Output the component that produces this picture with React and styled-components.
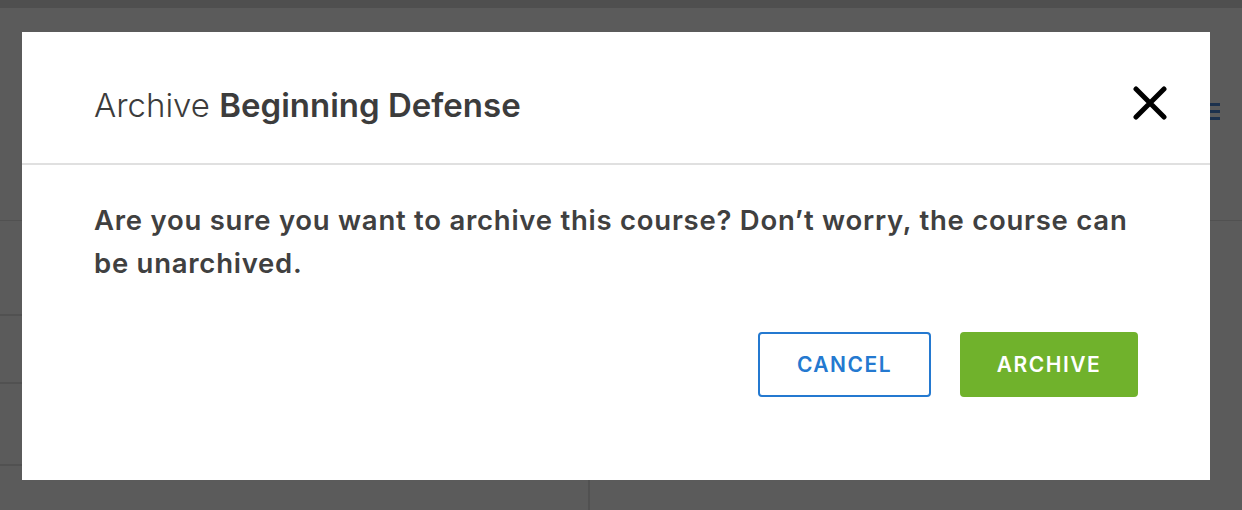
import React from "react";
import styled, { createGlobalStyle } from "styled-components";

const GlobalStyle = createGlobalStyle`
  html, body {
    margin: 0;
    padding: 0;
    width: 1242px;
    height: 510px;
    overflow: hidden;
    font-family: Inter, "Open Sans", "Liberation Sans", sans-serif;
  }
`;

// page behind the dialog
const Page = styled.div`
  position: relative;
  width: 1242px;
  height: 510px;
  background: #ffffff;
  display: flex;
  flex-direction: column;
`;

const TopStrip = styled.div`
  height: 8px;
  background: #dedede;
`;

const Toolbar = styled.div`
  height: 213px;
  box-sizing: border-box;
  border-bottom: 1px solid #e4e4e4;
  display: flex;
  justify-content: flex-end;
  align-items: flex-start;
  padding: 95px 22px 0 0;
`;

const MenuIcon = styled.div`
  width: 10px;
  display: flex;
  flex-direction: column;
  gap: 4px;

  span {
    display: block;
    height: 3px;
    background: #4f8ad8;
  }
`;

const Columns = styled.div`
  flex: 1;
  display: grid;
  grid-template-columns: 590px 1fr;
`;

const LeftColumn = styled.div`
  border-right: 2px solid #e4e4e4;
  display: flex;
  flex-direction: column;
`;

const ListRow = styled.div`
  height: ${(p) => p.h}px;
  box-sizing: border-box;
  border-bottom: 2px solid #e4e4e4;
`;

const Backdrop = styled.div`
  position: absolute;
  inset: 0;
  background: rgba(0, 0, 0, 0.645);
`;

const Dialog = styled.div`
  position: absolute;
  left: 22px;
  top: 32px;
  width: 1188px;
  height: 448px;
  background: #ffffff;
  display: flex;
  flex-direction: column;
  color: #3f3f3f;
`;

const Header = styled.div`
  height: 133px;
  box-sizing: border-box;
  border-bottom: 2px solid #e0e0e0;
  display: flex;
  align-items: center;
  justify-content: space-between;
  padding: 10px 42px 0 72px;
`;

const Title = styled.h2`
  margin: 5px 0 0;
  font-size: 33px;
  font-weight: 300;
  letter-spacing: 0;
  color: #3c3c3c;

  strong {
    font-weight: 600;
  }
`;

const CloseButton = styled.button`
  border: 0;
  background: none;
  padding: 0;
  width: 36px;
  height: 36px;
  display: flex;
  align-items: center;
  justify-content: center;
  cursor: pointer;
`;

const Body = styled.div`
  flex: 1;
  padding: 34px 72px 0 72px;
  display: flex;
  flex-direction: column;
`;

const Message = styled.p`
  margin: 0;
  font-size: 27.5px;
  line-height: 43px;
  font-weight: 600;
  letter-spacing: 0.75px;
  color: #404040;
`;

const Actions = styled.div`
  display: flex;
  justify-content: flex-end;
  gap: 29px;
  margin-top: 47px;
`;

const Button = styled.button`
  height: 65px;
  width: ${(p) => p.w}px;
  border-radius: 4px;
  font-family: Inter, "Open Sans", "Liberation Sans", sans-serif;
  font-size: 21px;
  font-weight: 600;
  letter-spacing: 1.5px;
  cursor: pointer;
  border: 2px solid ${(p) => (p.primary ? "#70b22c" : "#2479d0")};
  background: ${(p) => (p.primary ? "#70b22c" : "#ffffff")};
  color: ${(p) => (p.primary ? "#ffffff" : "#2479d0")};
  padding: 0;
`;

export default function App() {
  return (
    <>
      <GlobalStyle />
      <Page>
        <TopStrip />
        <Toolbar>
          <MenuIcon>
            <span />
            <span />
            <span />
          </MenuIcon>
        </Toolbar>
        <Columns>
          <LeftColumn>
            <ListRow h={95} />
            <ListRow h={68} />
            <ListRow h={82} />
          </LeftColumn>
          <div />
        </Columns>
        <Backdrop />
        <Dialog role="dialog">
          <Header>
            <Title>
              Archive <strong>Beginning Defense</strong>
            </Title>
            <CloseButton aria-label="Close">
              <svg width="34" height="34" viewBox="0 0 34 34">
                <path
                  d="M3 3 L31 31 M31 3 L3 31"
                  stroke="#000"
                  strokeWidth="5"
                  strokeLinecap="round"
                />
              </svg>
            </CloseButton>
          </Header>
          <Body>
            <Message>
              Are you sure you want to archive this course? Don’t worry, the
              course can be unarchived.
            </Message>
            <Actions>
              <Button w={173}>CANCEL</Button>
              <Button w={178} primary>
                ARCHIVE
              </Button>
            </Actions>
          </Body>
        </Dialog>
      </Page>
    </>
  );
}
